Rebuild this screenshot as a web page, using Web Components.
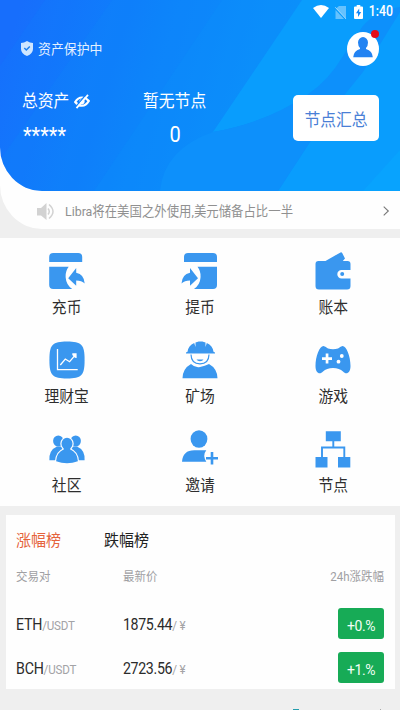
<!DOCTYPE html>
<html lang="zh-CN">
<head>
<meta charset="utf-8">
<title>资产</title>
<style>
html,body{margin:0;padding:0}
body{width:400px;height:710px;overflow:hidden;background:#efefef;font-family:Roboto,"Noto Sans CJK SC",sans-serif;color:#333}
</style>
</head>
<body>
<wallet-app></wallet-app>
<script>
const define=(name,html)=>{
  const t=document.createElement('template');
  t.innerHTML=html;
  customElements.define(name,class extends HTMLElement{
    constructor(){super();this.attachShadow({mode:'open'}).append(t.content.cloneNode(true));}
  });
};

/* A single line of text, slightly taller than its natural proportions. */
define('ui-text',`<style>:host{display:inline-block;white-space:nowrap;line-height:20px;transform:translateY(1px) scaleY(var(--stretch,1.06))}</style><slot></slot>`);

const icons={
  wifi:['0 0 16 13','<path fill="#fff" d="M0 3Q8-3 16 3L8 13z"/>'],
  sim:['0 0 11 13','<path fill="#fff" opacity=".38" d="M4 0h7v13L1 2.500zM.5 4L9 13H.5z"/><path stroke="#fff" opacity=".45" d="M0 1l11 12"/>'],
  battery:['0 0 9 14','<path fill="#fff" d="M2.700 0h3.600v1.500H8q1 0 1 1V13q0 1-1 1H1q-1 0-1-1V2.500q0-1 1-1h1.700z"/><path fill="#1489f8" d="M5.200 3.500L2 8.300h2v3.700l3.200-5H5.200z"/>'],
  shield:['0 0 12 15','<path fill="#cfe6ff" d="M6 0q3 2 6 2v6q0 4.500-6 7Q0 12.500 0 8V2q3 0 6-2z"/><path fill="none" stroke="#2080ee" stroke-width="1.500" d="M3.300 7l2 2 3.500-3.600"/>'],
  eye:['0 0 16 15','<path fill="none" stroke="#fff" stroke-width="2.200" d="M1.200 8Q4 3.500 8 3.500T14.800 7Q12 11.700 8 11.700T1.200 8z"/><circle cx="8" cy="7.600" r="2.600" fill="#fff"/><path stroke="#1180fc" stroke-width="1.300" d="M1.700 13L12.500 0"/><path stroke="#fff" stroke-width="1.800" d="M2.500 14.200L14 .8"/>'],
  avatar:['0 0 32 34','<ellipse cx="16" cy="17" rx="16" ry="17" fill="#fff"/><path fill="#2383f2" d="M11 10.500a5 5.400 0 0 1 10 0q0 3.500-2 5.500v1q6.500 2 6.800 8.300H6.200Q6.500 19 13 17v-1q-2-2-2-5.500z"/>'],
  speaker:['0 0 17 17','<path fill="#d2d2d2" d="M0 5h4l5.500-5v17L4 12.500H0z"/><path fill="none" stroke="#d2d2d2" stroke-width="1.500" d="M11 5.500q2.500 3 0 6M12 1.500q8 7 0 14"/>'],
  chevron:['0 0 6 10','<path fill="none" stroke="#777" stroke-width="1.100" d="M.7.700L5.300 5 .7 9.300"/>'],
  deposit:['0 0 36 38','<g transform="translate(-.8 0)"><path d="M1 10V5q0-4 4-4h25q4 0 4 4v5zM1 14.800h19.500q-3.500 4.500-3 11 .5 7.200 6.500 11.200H5q-4 0-4-4z"/><path d="M20 26.200L28 16v4.700q8 1.600 8.500 10.800-3-3-8.500-3v5.300z"/></g>'],
  withdraw:['0 0 36 38','<g transform="matrix(-1 0 0 1 36 0)"><path d="M1 10V5q0-4 4-4h25q4 0 4 4v5zM1 14.800h19.500q-3.500 4.500-3 11 .5 7.200 6.500 11.200H5q-4 0-4-4z"/><path d="M20 26.200L28 16v4.700q8 1.600 8.500 10.800-3-3-8.500-3v5.300z"/></g>'],
  wallet:['0 0 36 38','<path d="M3.500 9H10.500L25.500.4q1-.6 1.700.6L30 6.500 27.800 9H32.500q3 0 3 3v6H26.500a4.200 4.200 0 0 0 0 8.400h9V34q0 3.500-3.500 3.500H4q-3.500 0-3.500-3.500V12q0-3 3-3z"/><circle cx="27.200" cy="22" r="2"/>'],
  chart:['0 0 36 38','<path d="M18 .5c14.500 0 17.600 3 17.600 18.500S32.500 37.500 18 37.500.4 34.500.4 19 3.500.5 18 .5z"/><path fill="none" stroke="#fff" stroke-width="1.300" d="M8.500 8v20.700h20.200M11.300 24l5-6 4.300 2.700 6-7"/><path fill="#fff" d="M23.300 12.300h4.300V17l-1.700-.3-2.600-2.700z"/>'],
  miner:['0 0 36 38','<path d="M5.500 10.700q.8-6 6.700-8.700l1.300 4V1.500l3.200-1h3.600l3.200 1V6l1.300-4q5.900 2.700 6.700 8.700l1.500.7v1H4v-1z"/><path fill="none" stroke="#3a97ef" stroke-width="1.200" d="M9 13.500q.2 9.300 9 9.300t9-9.300"/><path d="M14.500 18.500h7q-1 1.800-3.500 1.800t-3.500-1.800zM9 23q4 4 9 3t9-3q8.200 4.500 8.500 14.200H.5Q.8 27.500 9 23z"/>'],
  game:['0 0 36 38','<path fill-rule="evenodd" d="M8.500 5q1.500 0 4.500 2.500 5 1.500 10 0Q26 5 27.500 5c4 0 8 10.500 8 20 0 7.500-4.500 9-7.500 5.500Q24.500 27 18 27T8 30.500C5 34 .5 32.500.5 25 .5 15.500 4.500 5 8.500 5zM10.700 12.500v3.700h-3.700v2.700h3.700v3.700h2.700v-3.700H17v-2.700h-3.600v-3.700z"/><circle cx="26.800" cy="15" r="1.900" fill="#fff"/><circle cx="23.500" cy="20.700" r="1.900" fill="#fff"/>'],
  group:['0 0 36 38','<ellipse cx="9.300" cy="11" rx="5.200" ry="5.600"/><ellipse cx="26.700" cy="11" rx="5.200" ry="5.600"/><path d="M8 16.500h6v13.800H.4Q-.2 20 8 16.500zM28 16.500h-6v13.800h13.600Q36.200 20 28 16.500z"/><g stroke="#fefefe" stroke-width="2.200"><ellipse cx="18" cy="13.700" rx="5.600" ry="6"/><path d="M15 19.300h6q7.400 3 7.900 12Q18 35 7.100 31.300 7.600 22.300 15 19.300z"/></g><ellipse cx="18" cy="13.700" rx="5.500" ry="5.900"/><path d="M15 19.300l-.5-1.300h7l-.5 1.300q7.400 3 7.900 12Q18 35 7.100 31.300 7.600 22.300 15 19.300z"/>'],
  invite:['0 0 36 38','<ellipse cx="17" cy="9" rx="8.400" ry="8.800"/><path d="M12.300 20.300h12q-4 5 0 11.500H0Q.8 20.300 12.300 20.300z"/><path fill="none" stroke="#3a97ef" stroke-width="2.600" d="M24 28.200h12M30 21.900v12.600"/>'],
  nodes:['0 0 36 38','<path d="M10.800 1.200h15v10h-15zM.5 27h12v10.500H.5zM23 27h12.300v10.500H23z"/><path fill="none" stroke="#3a97ef" stroke-width="1.900" d="M18.300 10v7.500M7 28V17.500h22.300V28"/>']
};
customElements.define('ui-icon',class extends HTMLElement{
  constructor(){super();this.attachShadow({mode:'open'});}
  connectedCallback(){
    const [box,body]=icons[this.getAttribute('name')],[,,w,h]=box.split(' ');
    this.shadowRoot.innerHTML=`<style>:host{display:block;flex:none;width:${w}px;height:${h}px}svg{display:block;overflow:visible}</style><svg width="${w}" height="${h}" viewBox="${box}" fill="#3a97ef">${body}</svg>`;
  }
});

define('status-bar',`<style>
:host{display:flex;height:25px;box-sizing:border-box;padding:5px 7px 0 0;justify-content:flex-end;color:#fff}
.sim{margin:1px 8px 0 6px}ui-text{font-size:12.300px;font-weight:500;margin:-4px 0 0 6px;--stretch:1.12}</style>
<ui-icon name="wifi"></ui-icon><ui-icon class="sim" name="sim"></ui-icon><ui-icon name="battery"></ui-icon><ui-text>1:40</ui-text>`);

define('user-avatar',`<style>:host{display:block;position:relative}i{position:absolute;right:0;top:-2px;width:8px;height:8px;border-radius:50%;background:#e60d18}</style><ui-icon name="avatar"></ui-icon><i></i>`);

define('asset-header',`<style>
:host{display:block;position:relative;height:191px;border-radius:0 0 0 42px/0 0 0 44px;overflow:hidden;color:#fff}
.bg{position:absolute;inset:0}
.in{position:relative}
.top{display:flex;justify-content:space-between;align-items:center;padding:7px 21px 0}
.safe{display:flex;align-items:center;gap:5px;font-size:12.900px;color:#e3f0ff;margin-top:-1px}
.main{display:flex;padding:25px 21px 0 22px}
.col1{width:121px}.col2{width:64px}
.col1,.col2{font-size:15.800px}
.line{display:flex;align-items:center;gap:5px;height:20px}
.stars{margin:12px 0 0 1px;font-size:20px;height:20px}
.zero{text-align:center;margin-top:11px;font-size:20px}
.btn{margin:4px 0 0 auto;width:86px;height:46px;border-radius:5px;background:#fff;color:#4a7fd6;display:flex;align-items:center;justify-content:center;font-size:15.800px}
.btn ui-text{margin-top:3px}
</style>
<svg class="bg" width="400" height="191" viewBox="0 0 400 191">
<defs><linearGradient id="g" gradientUnits="userSpaceOnUse" x1="0" y1="70" x2="260" y2="150"><stop offset="0" stop-color="#176efc"/><stop offset=".5" stop-color="#0f80fb"/><stop offset="1" stop-color="#0e90fb"/></linearGradient></defs>
<path fill="url(#g)" d="M0 0h400v191H0z"/>
<path fill="#0a8cfb" opacity=".12" d="M45 0H400V191H0V66z"/>
<path fill="#0a8cfb" opacity=".16" d="M112 0H400V191H0V160z"/>
<path fill="#0996fc" opacity=".2" d="M222 0H400V191H94z"/>
<path fill="#099dfd" d="M302 0H400V191H278L325 119 310 95Q265 123 213 132z"/>
<path fill="#0d90fb" d="M400 7Q376 10 362 27L343 56Q329 80 307 95 265 123 213 132 164 149 160 191H278L325 119 363 72 400 12z"/>
<path fill="#09a5fd" opacity=".7" d="M400 150V191H363z"/>
</svg>
<div class="in"><status-bar></status-bar>
<div class="top"><div class="safe"><ui-icon name="shield"></ui-icon><ui-text>资产保护中</ui-text></div><user-avatar></user-avatar></div>
<div class="main"><div class="col1"><div class="line"><ui-text>总资产</ui-text><ui-icon name="eye"></ui-icon></div><div class="stars"><ui-text>*****</ui-text></div></div>
<div class="col2"><div class="line"><ui-text>暂无节点</ui-text></div><div class="zero"><ui-text>0</ui-text></div></div>
<div class="btn"><ui-text>节点汇总</ui-text></div></div></div>`);

define('notice-bar',`<style>
:host{display:flex;align-items:center;height:82px;margin-top:-44px;padding:44px 11px 0 37px;box-sizing:border-box;background:#fefefe;border-radius:0 0 0 42px/0 0 0 44px;color:#909090;font-size:12.400px}
ui-text{margin-left:11px;flex:1;padding-top:2px}ui-icon{margin-top:2px}</style><ui-icon name="speaker"></ui-icon><ui-text><slot></slot></ui-text><ui-icon name="chevron"></ui-icon>`);

define('menu-grid',`<style>:host{display:grid;grid-template-columns:repeat(3,1fr);grid-auto-rows:89px;height:268px;margin-top:9px;padding-top:14px;box-sizing:border-box;background:#fefefe}</style><slot></slot>`);

customElements.define('menu-item',class extends HTMLElement{
  constructor(){super();this.attachShadow({mode:'open'});}
  connectedCallback(){
    this.shadowRoot.innerHTML=`<style>:host{display:flex;flex-direction:column;align-items:center;font-size:14.800px;color:#2e2e2e}ui-text{margin-top:7px}</style><ui-icon name="${this.getAttribute('icon')}"></ui-icon><ui-text><slot></slot></ui-text>`;
  }
});

define('pair-row',`<style>
:host{display:grid;grid-template-columns:107px 1fr auto;align-items:center;height:44px;font-size:14.200px;color:#2b2b2b;--stretch:1.1}
.num{letter-spacing:-.35px}
.name{letter-spacing:-.2px}
ui-text{margin-top:2px}
.chg{display:flex;align-items:center;justify-content:center;width:46px;height:31px;border-radius:3px;background:#17ab56;color:#f3fff7;font-size:14px;letter-spacing:-.4px}
.chg ui-text{margin-top:1px}
::slotted(small){font-size:11.600px;color:#a3a3a6;letter-spacing:-.2px}</style>
<ui-text class="name"><slot name="pair"></slot><slot name="quote"></slot></ui-text><ui-text class="num"><slot name="price"></slot><slot name="cur"></slot></ui-text><span class="chg"><ui-text><slot name="change"></slot></ui-text></span>`);

define('market-card',`<style>
:host{display:block;margin:9px 5.500px 0;height:174px;box-sizing:border-box;padding:15px 10.500px 0;background:#fefefe}
.tabs{display:flex;gap:43px;font-size:15px;color:#222}.on{color:#e5633c}
.head{display:grid;grid-template-columns:107px 1fr auto;font-size:11.500px;color:#a0a0a3;margin:16px 0 15px}</style>
<div class="tabs"><ui-text class="on">涨幅榜</ui-text><ui-text>跌幅榜</ui-text></div>
<div class="head"><ui-text>交易对</ui-text><ui-text>最新价</ui-text><ui-text>24h涨跌幅</ui-text></div><slot></slot>`);

define('bottom-edge',`<style>:host{display:flex;height:21px;align-items:flex-end;padding-left:293px}i{width:6px;height:1px;background:#249dad}b{width:1px;height:1px;background:#aaa;margin-left:81px}</style><i></i><b></b>`);

define('wallet-app',`<style>:host{display:block;width:400px;height:710px;overflow:hidden}</style>
<asset-header></asset-header>
<notice-bar>Libra将在美国之外使用,美元储备占比一半</notice-bar>
<menu-grid>
<menu-item icon="deposit">充币</menu-item><menu-item icon="withdraw">提币</menu-item><menu-item icon="wallet">账本</menu-item>
<menu-item icon="chart">理财宝</menu-item><menu-item icon="miner">矿场</menu-item><menu-item icon="game">游戏</menu-item>
<menu-item icon="group">社区</menu-item><menu-item icon="invite">邀请</menu-item><menu-item icon="nodes">节点</menu-item>
</menu-grid>
<market-card>
<pair-row><span slot="pair">ETH</span><small slot="quote">/USDT</small><span slot="price">1875.44</span><small slot="cur">/ ¥</small><span slot="change">+0.%</span></pair-row>
<pair-row><span slot="pair">BCH</span><small slot="quote">/USDT</small><span slot="price">2723.56</span><small slot="cur">/ ¥</small><span slot="change">+1.%</span></pair-row>
</market-card>
<bottom-edge></bottom-edge>`);
</script>
</body>
</html>
